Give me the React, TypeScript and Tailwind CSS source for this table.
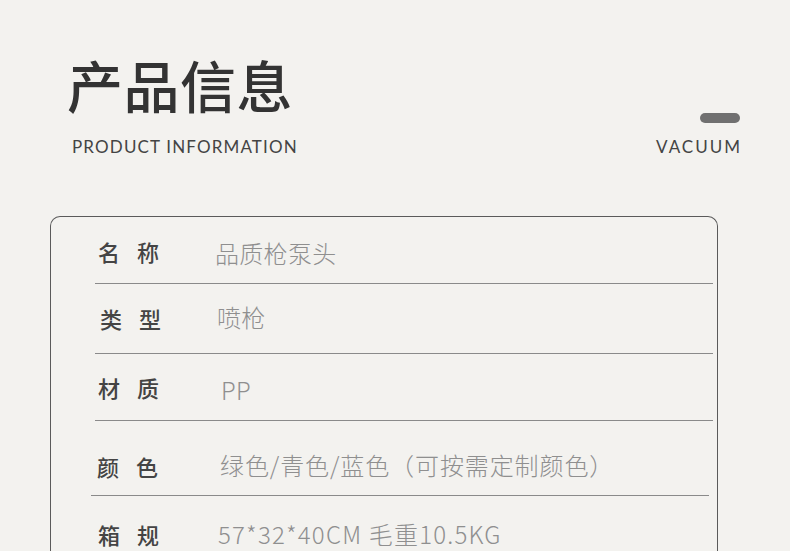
const rows = [
  { label: "名 称", value: "品质枪泵头", h: "h-[67px]", lx: "pl-[47px]", vx: "pl-[55px]", ly: "pt-[19px]", vy: "pt-[20px]", tr: "tracking-[0.3px]", line: "ml-[44px] mr-[4px]" },
  { label: "类 型", value: "喷枪", h: "h-[70px]", lx: "pl-[49px]", vx: "pl-[57px]", ly: "pt-[19px]", vy: "pt-[17px]", tr: "tracking-[0.3px]", line: "ml-[44px] mr-[4px]" },
  { label: "材 质", value: "PP", h: "h-[67px]", lx: "pl-[47px]", vx: "pl-[61px]", ly: "pt-[18px]", vy: "pt-[20px]", tr: "tracking-[0.3px]", line: "ml-[44px] mr-[4px]" },
  { label: "颜 色", value: "绿色/青色/蓝色（可按需定制颜色）", h: "h-[75px]", lx: "pl-[46px]", vx: "pl-[60px]", ly: "pt-[30px]", vy: "pt-[28px]", tr: "tracking-[0.9px]", line: "ml-[40px] mr-[8px]" },
  { label: "箱 规", value: "57*32*40CM 毛重10.5KG", h: "h-[80px]", lx: "pl-[47px]", vx: "pl-[58px]", ly: "pt-[23px]", vy: "pt-[22px]", tr: "tracking-[1.2px]", line: "" },
];

export default function App() {
  return (
    <div className="w-[790px] h-[551px] overflow-hidden bg-[#f3f2ef] font-['Noto_Sans_CJK_SC',sans-serif]">
      <div className="flex justify-between pt-[46px] pl-[67px] pr-[50px]">
        <div>
          <h1 className="text-[56px] leading-[76px] font-medium tracking-[0.5px] text-[#333333]">产品信息</h1>
          <p className="mt-[12px] pl-[5px] font-['Lato',sans-serif] text-[17px] tracking-[1.15px] text-[#444444]">PRODUCT INFORMATION</p>
        </div>
        <div className="flex flex-col items-end pt-[67px]">
          <div className="w-[40px] h-[10px] rounded-full bg-[#707070]" />
          <p className="mt-[11px] -mr-[2px] font-['Lato',sans-serif] text-[17px] tracking-[2px] text-[#444444]">VACUUM</p>
        </div>
      </div>

      <div className="mt-[56px] ml-[50px] w-[668px] border border-[#5a5a5a] border-b-0 rounded-t-[10px]">
        {rows.map((r) => (
          <div key={r.label} className={`${r.h} flex flex-col`}>
            <div className="flex flex-1">
              <span className={`${r.lx} ${r.ly} w-[165px] shrink-0 text-[22px] leading-[30px] font-medium tracking-[6px] text-[#444444]`}>
                {r.label}
              </span>
              <span className={`${r.vx} ${r.vy} ${r.tr} -ml-[56px] text-[24px] leading-[32px] font-light text-[#8f8f8f]`}>
                {r.value}
              </span>
            </div>
            {r.line && <div className={`${r.line} h-px bg-[#8a8a8a]`} />}
          </div>
        ))}
      </div>
    </div>
  );
}
